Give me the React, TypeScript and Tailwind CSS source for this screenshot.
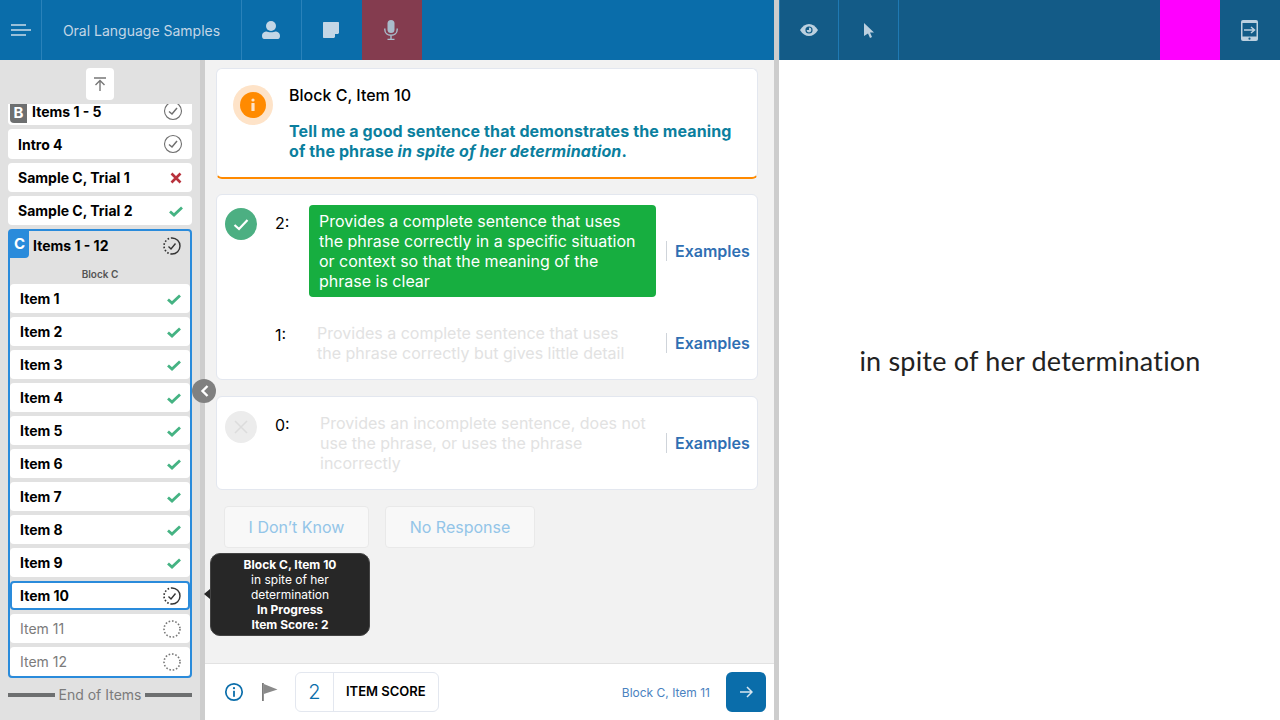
import React from 'react';

const CheckMark = () => (
  <svg width="14" height="12" viewBox="0 0 14 12" className="shrink-0">
    <path d="M1 6.5 L5 10 L13 2.5" fill="none" stroke="#45b383" strokeWidth="2.8" />
  </svg>
);

const CrossMark = () => (
  <svg width="12" height="12" viewBox="0 0 12 12" className="shrink-0">
    <path d="M1.5 1.5 L10.5 10.5 M10.5 1.5 L1.5 10.5" fill="none" stroke="#b8323c" strokeWidth="2.6" />
  </svg>
);

const DoneCircle = () => (
  <svg width="20" height="20" viewBox="0 0 20 20" className="shrink-0">
    <circle cx="10" cy="10" r="8.5" fill="none" stroke="#6f6f6f" strokeWidth="1.1" />
    <path d="M6 10.5 L9 13 L14 7" fill="none" stroke="#6f6f6f" strokeWidth="1.5" />
  </svg>
);

const ProgressCircle = () => (
  <svg width="18" height="18" viewBox="0 0 18 18" className="shrink-0">
    <path d="M9 1 A8 8 0 0 1 9 17" fill="none" stroke="#333" strokeWidth="1.4" />
    <path d="M9 17 A8 8 0 0 1 9 1" fill="none" stroke="#333" strokeWidth="1.6" strokeDasharray="1.6 1.8" />
    <path d="M5.5 9.5 L8 12 L12.5 6.5" fill="none" stroke="#333" strokeWidth="1.4" />
  </svg>
);

const EmptyCircle = () => (
  <svg width="18" height="18" viewBox="0 0 18 18" className="shrink-0">
    <circle cx="9" cy="9" r="8" fill="none" stroke="#777" strokeWidth="1.6" strokeDasharray="1.6 1.8" />
  </svg>
);

const blockItems = ['Item 1', 'Item 2', 'Item 3', 'Item 4', 'Item 5', 'Item 6', 'Item 7', 'Item 8', 'Item 9'];

const Row = ({ label, icon }: { label: string; icon: React.ReactNode }) => (
  <div className="h-[29px] bg-white rounded flex items-center justify-between pl-[10px] pr-[6px] text-[14px] font-bold text-black">
    <span>{label}</span>
    <span className="w-[20px] flex justify-center">{icon}</span>
  </div>
);

const Examples = () => (
  <div className="flex items-center h-[20px] border-l border-[#cfd4da] pl-[8px] text-[16px] font-semibold text-[#2f6fb3]">
    Examples
  </div>
);

export default function App() {
  return (
    <div className="w-[1280px] h-[720px] flex overflow-hidden bg-white font-['Inter',sans-serif]">
      <div className="w-[774px] h-full flex flex-col">
        <header className="h-[60px] bg-[#0a6daa] flex shrink-0 text-[#c3d6e6]">
          <div className="w-[42px] border-r border-[#2a82ba] flex items-center justify-center">
            <svg width="20" height="14" viewBox="0 0 20 14">
              <path d="M0 2h15M0 7h20M0 12h15" stroke="#c9dbe9" strokeWidth="1.6" />
            </svg>
          </div>
          <div className="w-[200px] border-r border-[#2a82ba] flex items-center justify-center text-[14px] font-normal">
            Oral Language Samples
          </div>
          <div className="w-[60px] border-r border-[#2a82ba] flex items-center justify-center pr-[1px]">
            <svg width="18" height="18" viewBox="0 0 18 18" fill="#c3d6e6">
              <circle cx="9" cy="5" r="5" />
              <path d="M0 15 C0 11.5 3 10.5 4.5 10.5 C6 11.5 12 11.5 13.5 10.5 C15 10.5 18 11.5 18 15 C18 17 17 18 16 18 H2 C1 18 0 17 0 15Z" />
            </svg>
          </div>
          <div className="w-[60px] flex items-center justify-center pr-[2px]">
            <svg width="16" height="16" viewBox="0 0 16 16">
              <path d="M1 0H15C15.6 0 16 .4 16 1V11L11 16H1C.4 16 0 15.6 0 15V1C0 .4 .4 0 1 0Z" fill="#c3d6e6" />
              <path d="M12 12H16L12 16Z" fill="#0a6daa" />
            </svg>
          </div>
          <div className="w-[60px] bg-[#843c4f] flex items-center justify-center pr-[2px]">
            <svg width="14" height="20" viewBox="0 0 14 20" fill="none">
              <rect x="3.5" y="0" width="7" height="13" rx="3.5" fill="#a9bccb" />
              <path d="M.8 8.5V9.5C.8 13 3.5 15.3 7 15.3S13.2 13 13.2 9.5V8.5M7 15.3V19.5M3.5 19.5H10.5" stroke="#a9bccb" strokeWidth="1.4" />
            </svg>
          </div>
        </header>

        <div className="flex-1 flex min-h-0 relative">
          <aside className="w-[205px] shrink-0 bg-[#e1e1e1] border-r-[5px] border-[#cdcdcd] flex flex-col">
            <div className="h-[44px] shrink-0 pt-[8px] flex justify-center">
              <div className="w-[28px] h-[32px] bg-white rounded-sm flex items-center justify-center">
                <svg width="14" height="14" viewBox="0 0 14 14" fill="none" stroke="#777" strokeWidth="1.4">
                  <path d="M1 1H13M7 14V3.5M2.5 8L7 3.5L11.5 8" />
                </svg>
              </div>
            </div>
            <div className="flex-1 overflow-hidden px-[8px] flex flex-col">
              <div className="flex flex-col gap-[4px]">
                <div className="h-[21px] bg-white rounded-b flex justify-between pr-[9px] text-[14px] font-bold text-black">
                  <div className="flex gap-[5px]">
                    <span className="ml-[2px] w-[17px] h-[19px] bg-[#6d6f70] rounded-bl text-white font-bold flex items-center justify-center text-[15px] leading-none pb-[3px]">B</span>
                    <span className="leading-[15px]">Items 1 - 5</span>
                  </div>
                  <span className="w-[20px] h-[14px] flex justify-center items-center"><DoneCircle /></span>
                </div>
                <div className="h-[30px] bg-white rounded flex items-center justify-between pl-[10px] pr-[9px] text-[14px] font-bold text-black">
                  <span>Intro 4</span>
                  <span className="w-[20px] flex justify-center"><DoneCircle /></span>
                </div>
                <Row label="Sample C, Trial 1" icon={<CrossMark />} />
                <Row label="Sample C, Trial 2" icon={<CheckMark />} />
              </div>
              <div className="mt-[4px] h-[449px] shrink-0 border-2 border-[#2a8bdb] rounded flex flex-col">
                <div className="h-[27px] shrink-0 flex items-center justify-between pr-[9px] text-[14px] font-bold text-black">
                  <div className="flex items-center gap-[4px] h-full">
                    <span className="w-[19px] h-full bg-[#2a8bdb] text-white font-bold flex items-center justify-center text-[15px] rounded-br">C</span>
                    <span className="pt-[2px]">Items 1 - 12</span>
                  </div>
                  <span className="pt-[2px]"><ProgressCircle /></span>
                </div>
                <div className="h-[26px] shrink-0 pt-[9px] text-center text-[10px] font-semibold text-[#555]">Block C</div>
                <div className="flex flex-col gap-[4px]">
                  {blockItems.map(item => (
                    <Row key={item} label={item} icon={<CheckMark />} />
                  ))}
                  <div className="h-[29px] bg-white rounded border-2 border-[#2a8bdb] flex items-center justify-between pl-[8px] pr-[7px] text-[14px] font-bold text-black">
                    <span>Item 10</span>
                    <ProgressCircle />
                  </div>
                  <div className="h-[29px] bg-white rounded flex items-center justify-between pl-[10px] pr-[9px] text-[14px] text-[#7b7b7b]">
                    <span>Item 11</span>
                    <EmptyCircle />
                  </div>
                  <div className="h-[29px] bg-white rounded flex items-center justify-between pl-[10px] pr-[9px] text-[14px] text-[#7b7b7b]">
                    <span>Item 12</span>
                    <EmptyCircle />
                  </div>
                </div>
              </div>
              <div className="mt-[6px] flex items-center gap-[4px] text-[14px] text-[#7b7b7b]">
                <span className="flex-1 h-[4px] bg-[#6d6f70]" />
                <span>End of Items</span>
                <span className="flex-1 h-[4px] bg-[#6d6f70]" />
              </div>
            </div>
          </aside>

          <main className="flex-1 min-w-0 bg-[#f2f2f2] flex flex-col">
            <div className="flex-1 min-h-0 pl-[11px] pr-[16px] pt-[8px] flex flex-col">
              <section className="h-[111px] shrink-0 bg-white rounded-md border border-[#e3e7ef] border-b-2 border-b-[#ff8a00] flex pl-[16px] pt-[16px] gap-[16px]">
                <div className="w-[40px] h-[40px] shrink-0 rounded-full bg-[#fee3c8] flex items-center justify-center">
                  <div className="w-[26px] h-[26px] rounded-full bg-[#ff8a00] flex items-center justify-center">
                    <svg width="6" height="14" viewBox="0 0 6 14" fill="#fee3c8">
                      <circle cx="3" cy="2" r="1.6" />
                      <rect x="1.4" y="5" width="3.2" height="8" rx="0.6" />
                    </svg>
                  </div>
                </div>
                <div>
                  <div className="text-[16px] font-medium leading-[20px] text-black">Block C, Item 10</div>
                  <p className="mt-[16px] text-[16px] font-bold leading-[20px] tracking-[0.11px] text-[#0b7f9e]">
                    Tell me a good sentence that demonstrates the meaning
                    <br />
                    of the phrase <em>in spite of her determination</em>.
                  </p>
                </div>
              </section>

              <section className="mt-[15px] h-[186px] shrink-0 bg-white rounded-md border border-[#e3e7ef] pt-[10px] pl-[8px] pr-[6px] flex flex-col">
                <div className="flex h-[92px]">
                  <div className="w-[32px] h-[32px] mt-[3px] shrink-0 rounded-full bg-[#4caf82] flex items-center justify-center">
                    <svg width="16" height="13" viewBox="0 0 16 13" fill="none" stroke="white" strokeWidth="2.2">
                      <path d="M1.5 7L6 11L14.5 2" />
                    </svg>
                  </div>
                  <div className="ml-[18px] w-[34px] shrink-0 mt-[8px] text-[16px] leading-[20px] text-black">2:</div>
                  <div className="w-[347px] shrink-0 h-[92px] bg-[#17ae40] rounded-sm px-[10px] py-[6px] text-[16px] leading-[20px] text-white">
                    Provides a complete sentence that uses the phrase correctly in a specific situation or context so that the meaning of the phrase is clear
                  </div>
                  <div className="ml-[10px] self-center shrink-0"><Examples /></div>
                </div>
                <div className="flex mt-[26px] h-[40px]">
                  <div className="w-[50px] shrink-0" />
                  <div className="w-[42px] shrink-0 mt-[2px] text-[16px] leading-[20px] text-black">1:</div>
                  <div className="w-[349px] shrink-0 pr-[29px] text-[16px] leading-[20px] text-[#e2e2e2]">
                    Provides a complete sentence that uses the phrase correctly but gives little detail
                  </div>
                  <div className="self-center shrink-0"><Examples /></div>
                </div>
              </section>

              <section className="mt-[16px] h-[94px] shrink-0 bg-white rounded-md border border-[#e3e7ef] pt-[18px] pl-[8px] pr-[6px] flex">
                <div className="w-[32px] h-[32px] -mt-[4px] shrink-0 rounded-full bg-[#ececec] flex items-center justify-center">
                  <svg width="14" height="14" viewBox="0 0 14 14" fill="none" stroke="#dcdcdc" strokeWidth="1.6">
                    <path d="M1 1L13 13M13 1L1 13" />
                  </svg>
                </div>
                <div className="ml-[18px] w-[45px] shrink-0 text-[16px] leading-[20px] text-black">0:</div>
                <div className="w-[346px] shrink-0 text-[16px] leading-[20px] text-[#e2e2e2] -mt-[2px]">
                  Provides an incomplete sentence, does not use the phrase, or uses the phrase incorrectly
                </div>
                <div className="self-center shrink-0 -mt-[18px]"><Examples /></div>
              </section>

              <div className="mt-[16px] ml-[8px] flex gap-[16px]">
                <button className="w-[145px] h-[42px] bg-[#f8f8f8] border border-[#e9e9e9] rounded text-[16px] text-[#93c5e8]">I Don’t Know</button>
                <button className="w-[150px] h-[42px] bg-[#f8f8f8] border border-[#e9e9e9] rounded text-[16px] text-[#93c5e8]">No Response</button>
              </div>
            </div>

            <footer className="h-[57px] shrink-0 bg-white border-t border-[#e2e2e2] flex items-center pl-[19px] pr-[8px]">
              <svg width="20" height="20" viewBox="0 0 20 20" fill="none">
                <circle cx="10" cy="10" r="8.2" stroke="#0a6daa" strokeWidth="1.7" />
                <circle cx="10" cy="6.2" r="1.1" fill="#0a6daa" />
                <rect x="9.1" y="8.8" width="1.8" height="6" fill="#0a6daa" />
              </svg>
              <svg width="18" height="20" viewBox="0 0 18 20" className="ml-[17px]">
                <rect x="1" y="1" width="1.8" height="18" fill="#7b7b7b" />
                <path d="M2.8 2L16.5 7.5L2.8 12Z" fill="#8a8a8a" />
              </svg>
              <div className="ml-[16px] w-[144px] h-[40px] border border-[#e3e7ef] rounded-md flex items-center">
                <span className="w-[38px] h-full border-r border-[#e3e7ef] flex items-center justify-center text-[20px] font-light text-[#0a6daa]">2</span>
                <span className="pl-[12px] text-[13px] font-semibold text-black">ITEM SCORE</span>
              </div>
              <span className="ml-auto mt-[1px] text-[12px] text-[#4a82bf]">Block C, Item 11</span>
              <div className="ml-[16px] w-[40px] h-[40px] bg-[#0a6daa] rounded-md flex items-center justify-center">
                <svg width="14" height="14" viewBox="0 0 14 14" fill="none" stroke="#d8e6f0" strokeWidth="1.5">
                  <path d="M1 7H13M8 2L13 7L8 12" />
                </svg>
              </div>
            </footer>
          </main>

          <div className="absolute left-[192px] top-[319px] w-[24px] h-[24px] rounded-full bg-[#808080] flex items-center justify-center">
            <svg width="9" height="12" viewBox="0 0 9 12" fill="none" stroke="white" strokeWidth="2.4">
              <path d="M7.5 1L2.5 6L7.5 11" />
            </svg>
          </div>

          <div className="absolute left-[210px] top-[493px] w-[160px] h-[83px] rounded-[10px] bg-[#272727] border border-[#444] flex flex-col items-center justify-center text-[12px] leading-[15px] text-center text-white">
            <span className="font-bold">Block C, Item 10</span>
            <span>in spite of her</span>
            <span>determination</span>
            <span className="font-bold">In Progress</span>
            <span className="font-bold">Item Score: 2</span>
          </div>
          <div className="absolute left-[204px] top-[529px] border-y-[5px] border-y-transparent border-r-[6px] border-r-[#272727]" />
        </div>
      </div>

      <div className="w-[5px] h-full shrink-0 bg-[#cdcdcd]" />

      <div className="flex-1 flex flex-col min-w-0">
        <header className="h-[60px] shrink-0 bg-[#135b87] flex">
          <div className="w-[60px] border-x border-[#1f79b3] flex items-center justify-center">
            <svg width="18" height="12" viewBox="0 0 18 12">
              <path d="M0 6C2.5 2 5.5 0 9 0S15.5 2 18 6C15.5 10 12.5 12 9 12S2.5 10 0 6Z" fill="#bcd0df" />
              <circle cx="9" cy="6" r="3.6" fill="#135b87" />
              <path d="M9 3.6A2.4 2.4 0 1 1 6.6 6H9Z" fill="#bcd0df" />
            </svg>
          </div>
          <div className="w-[60px] border-r border-[#1f79b3] flex items-center justify-center">
            <svg width="10" height="15" viewBox="0 0 10 15" fill="#bcd0df">
              <path d="M0 0L10 9.5H6L8 14L6 15L4 10.5L0 13Z" />
            </svg>
          </div>
          <div className="flex-1" />
          <div className="w-[60px] bg-[#ff00ff]" />
          <div className="w-[60px] flex items-center justify-center pr-[2px]">
            <svg width="17" height="21" viewBox="0 0 17 21">
              <rect x="0" y="0" width="17" height="21" rx="2" fill="#bcd0df" />
              <rect x="1.5" y="3" width="14" height="13.5" fill="#135b87" />
              <path d="M3 10H13M10 7L13.5 10L10 13" fill="none" stroke="#bcd0df" strokeWidth="1.5" />
              <circle cx="8.5" cy="18.7" r="1.1" fill="#135b87" />
            </svg>
          </div>
        </header>
        <div className="flex-1 flex items-center justify-center pb-[57px] pl-[1px] text-[27px] tracking-[0.2px] text-[#222] font-['Lato',sans-serif]">
          in spite of her determination
        </div>
      </div>
    </div>
  );
}
